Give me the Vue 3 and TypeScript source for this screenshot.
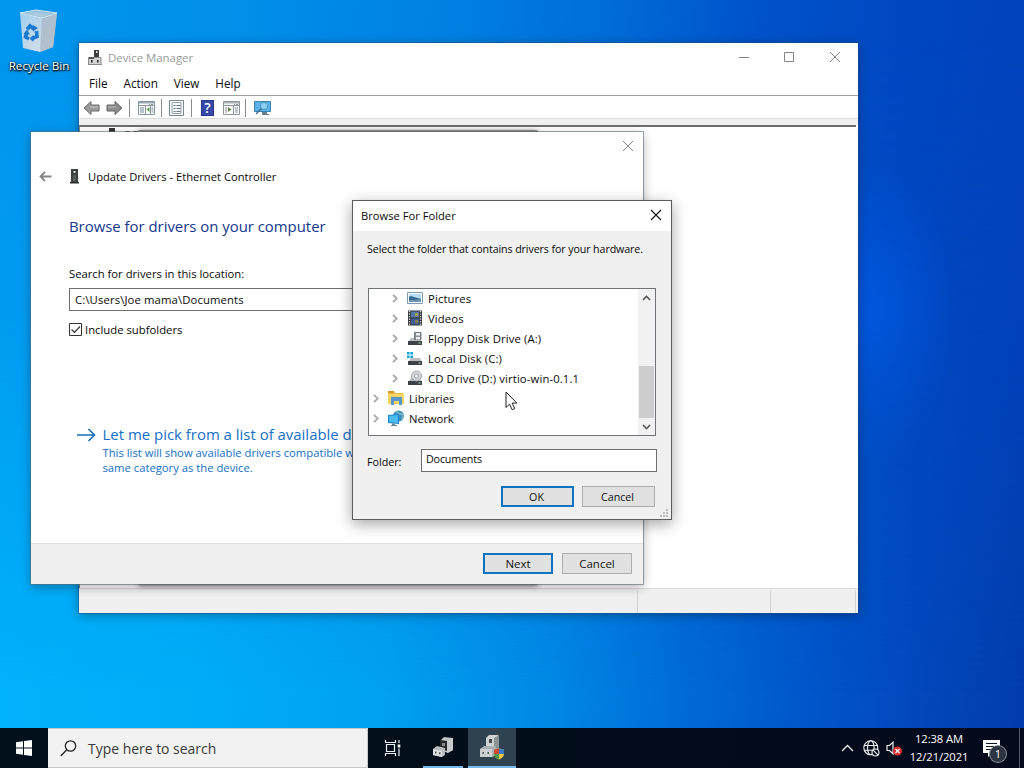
<script setup lang="ts">
interface TreeItem {
  label: string
  icon: string
  level: number
}

const menus: string[] = ['File', 'Action', 'View', 'Help']

const tree: TreeItem[] = [
  { label: 'Pictures', icon: 'pictures', level: 1 },
  { label: 'Videos', icon: 'videos', level: 1 },
  { label: 'Floppy Disk Drive (A:)', icon: 'floppy', level: 1 },
  { label: 'Local Disk (C:)', icon: 'disk', level: 1 },
  { label: 'CD Drive (D:) virtio-win-0.1.1', icon: 'cd', level: 1 },
  { label: 'Libraries', icon: 'libraries', level: 0 },
  { label: 'Network', icon: 'network', level: 0 },
]
</script>

<template>
  <div class="desktop">
    <div class="wallpaper" />
    <div class="shortcut">
      <svg class="bin" width="40" height="44" viewBox="0 0 40 44">
        <defs>
          <linearGradient id="binFront" x1="0" y1="0" x2="1" y2="1">
            <stop offset="0" stop-color="#a3cfed" />
            <stop offset="1" stop-color="#dfe1e6" />
          </linearGradient>
        </defs>
        <path d="M1 4 L19 8 L38 4 L34 38 L21 43 L4 39 Z" fill="url(#binFront)" />
        <path d="M23 8 L38 4 L34 38 L21 43 Z" fill="#a8b6c4" opacity=".75" />
        <path d="M1 4 L17 1 L38 4 L23 9 Z" fill="#8cbfdd" stroke="#d3e8f4" stroke-width="1" />
        <path d="M4 5 L17 3 L34 5 L23 8 Z" fill="#a9c9dc" />
        <g fill="none" stroke="#1b7bd0" stroke-width="3.6">
          <path d="M8 20.500 L11 17 L15 20" />
          <path d="M17.500 22 L18 27.500 L13 29.500" />
          <path d="M10 30 L6.500 28 L8 23" />
        </g>
        <path d="M14 16 L19 19 L14 22.500 Z M14.500 26 L14.500 33 L10.500 29.500 Z M4.500 25 L8 20.500 L11 25.500 Z" fill="#1b7bd0" />
      </svg>
      <span class="shortcut-label">Recycle Bin</span>
    </div>

    <!-- Device Manager -->
    <section class="win manager">
      <header class="m-title">
        <svg width="14" height="16" viewBox="0 0 14 16">
          <path d="M6 0h5v8H6z" fill="#3c3c3c" />
          <path d="M8 1h1.500v2H8z" fill="#ddd" />
          <path d="M.500 7.500h12.500v7H.500z" fill="#d2d2d2" stroke="#8b8b8b" />
          <path d="M1 7h5v2H1z" fill="#555" />
          <path d="M3 10h1.500v2.500H3zM9 10h1.500v2.500H9z" fill="#222" />
          <path d="M0 14h14v1H0z" fill="#888" />
        </svg>
        <h1>Device Manager</h1>
        <div class="m-controls">
          <svg width="12" height="12" viewBox="0 0 12 12"><path d="M1 6.500h10" /></svg>
          <svg width="12" height="12" viewBox="0 0 12 12"><path d="M1.500 1.500h9v9h-9z" /></svg>
          <svg width="12" height="12" viewBox="0 0 12 12"><path d="M1 1l10 10M11 1L1 11" /></svg>
        </div>
      </header>
      <nav class="menus"><span v-for="m in menus" :key="m">{{ m }}</span></nav>
      <div class="tools">
        <svg class="t-arrow" width="17" height="16" viewBox="0 0 17 16">
          <path d="M1 8L8 1.500V5h8v6H8v3.500z" fill="#9b9b9b" stroke="#6b6b6b" />
          <path d="M7 7h8" stroke="#c6c6c6" />
        </svg>
        <svg class="t-arrow2" width="17" height="16" viewBox="0 0 17 16">
          <path d="M16 8L9 1.500V5H1v6h8v3.500z" fill="#8c8c8c" stroke="#666" />
          <path d="M2 7h8" stroke="#c0c0c0" />
        </svg>
        <i class="sep s1" />
        <svg class="t-tree" width="17" height="16" viewBox="0 0 17 16">
          <path d="M.500 1.500h16v13H.500z" fill="#fdfdfd" stroke="#8396a3" />
          <path d="M1 2h15v1.500H1z" fill="#9aabb6" />
          <path d="M1 5.500h15M7.500 6v8M12.500 6v8" stroke="#8a9aa5" />
          <path d="M2 8h4M2 10h4M2 12h4M13.500 8h2M13.500 10h2M13.500 12h2" stroke="#75899a" />
          <path d="M11.500 7v5L8.500 9.500z" fill="#5c9a4c" />
          <path d="M11 4.500h1M13 4.500h2" stroke="#7d8f9b" />
        </svg>
        <i class="sep s2" />
        <svg class="t-prop" width="15" height="16" viewBox="0 0 15 16">
          <path d="M.500.500h14v15H.500z" fill="#fff" stroke="#748792" />
          <path d="M3 2.500h9v11H3z" fill="#f3f5f6" stroke="#93a2ab" />
          <path d="M4.500 5.500h2M7.500 5.500h4M4.500 8.500h2M7.500 8.500h4M4.500 11.500h2M7.500 11.500h4" stroke="#627783" />
        </svg>
        <i class="sep s3" />
        <div class="t-help">?</div>
        <svg class="t-scan" width="17" height="16" viewBox="0 0 17 16">
          <path d="M.500 1.500h16v13H.500z" fill="#fdfdfd" stroke="#8c979d" />
          <path d="M1 2h15v1.500H1z" fill="#a7b1b5" />
          <path d="M1 5.500h15M10.500 6v8" stroke="#8a9aa5" />
          <path d="M2 8h2M2 10h2M2 12h2M12 8h3M12 10h3M12 12h3" stroke="#82919b" />
          <path d="M5 7v5l3.500-2.500z" fill="#5c8a3c" />
          <path d="M11 4.500h1M13 4.500h2" stroke="#87959c" />
        </svg>
        <i class="sep s4" />
        <svg class="t-mon" width="18" height="17" viewBox="0 0 18 17">
          <path d="M.500 1.500h16v10H.500z" fill="#5ab3e6" stroke="#3d82b0" />
          <path d="M8 12h5v2H8zM8 14h7v1H8z" fill="#66808f" />
          <circle cx="10" cy="6" r="3.600" fill="#8ad2f4" stroke="#5595bd" />
          <path d="M7.500 8.500L2 14" stroke="#3c718f" stroke-width="1.500" />
        </svg>
      </div>
      <div class="m-gap" />
      <div class="m-body">
        <div class="m-row">
          <svg width="10" height="14" viewBox="0 0 10 14"><path d="M2 0h6v9H2z" fill="#333" /></svg>
          <span>DE</span>
        </div>
      </div>
      <footer class="m-status"><span class="st a" /><span class="st b" /><span class="st c" /></footer>
    </section>

    <div class="ghost" />

    <!-- Update Drivers wizard -->
    <section class="win wizard">
      <svg class="w-close" width="12" height="12" viewBox="0 0 12 12"><path d="M1 1l10 10M11 1L1 11" /></svg>
      <header class="w-head">
        <svg width="13" height="11" viewBox="0 0 13 11">
          <path d="M12.500 5.500H1.500M6 1L1.500 5.500L6 10" fill="none" stroke="#858585" stroke-width="1.800" />
        </svg>
        <svg class="w-dev" width="9" height="15" viewBox="0 0 9 15">
          <path d="M1 0h7v14H1z" fill="#3b3f3e" />
          <path d="M3.500 2h2v2h-2z" fill="#d9e3da" />
          <path d="M3 6h3v6H3z" fill="#56605b" />
          <path d="M0 13h9v1.500H0z" fill="#2e2e2e" />
        </svg>
        <span>Update Drivers - Ethernet Controller</span>
      </header>
      <h2>Browse for drivers on your computer</h2>
      <label class="w-label">Search for drivers in this location:</label>
      <div class="w-path">C:\Users\Joe mama\Documents</div>
      <div class="w-check">
        <svg width="13" height="13" viewBox="0 0 13 13">
          <path d="M.500.500h12v12H.500z" fill="#fff" stroke="#333" />
          <path d="M2.500 6.500l3 3L11 3.500" fill="none" stroke="#333" stroke-width="1.200" />
        </svg>
        <span>Include subfolders</span>
      </div>
      <div class="w-link">
        <svg width="19" height="14" viewBox="0 0 19 14">
          <path d="M0 7h17.500M11.500 1l6 6l-6 6" fill="none" stroke="#1a6fb8" stroke-width="1.600" />
        </svg>
        <div>
          <p class="l-main">Let me pick from a list of available d</p>
          <p class="l-sub">This list will show available drivers compatible w</p>
          <p class="l-sub l-two">same category as the device.</p>
        </div>
      </div>
      <footer class="w-foot">
        <button class="btn primary">Next</button>
        <button class="btn">Cancel</button>
      </footer>
    </section>

    <!-- Browse For Folder -->
    <section class="win browse">
      <header class="b-title">
        <span>Browse For Folder</span>
        <svg width="12" height="12" viewBox="0 0 12 12"><path d="M1 1l10 10M11 1L1 11" stroke="#111" stroke-width="1.100" /></svg>
      </header>
      <p class="b-msg">Select the folder that contains drivers for your hardware.</p>
      <div class="tree">
        <ul>
          <li v-for="t in tree" :key="t.label" :class="{ deep: t.level === 1 }">
            <svg class="chev" width="6" height="9" viewBox="0 0 6 9"><path d="M1 .800l3.700 3.700L1 8.200" fill="none" stroke="#a3a3a3" stroke-width="1.700" /></svg>
            <svg class="ico" width="16" height="16" viewBox="0 0 16 16">
              <template v-if="t.icon === 'pictures'">
                <path d="M.500 2.500h15v11H.500z" fill="#fff" stroke="#7f9bb3" />
                <path d="M2 4h12v4H2z" fill="#b5dcf3" />
                <path d="M2 6.500c4-1 6 2 12 2v3H2z" fill="#376a93" />
                <path d="M2 10c4 0 7 0 12-1v3H2z" fill="#6f95b3" />
              </template>
              <template v-else-if="t.icon === 'videos'">
                <path d="M1 0.500h14v15H1z" fill="#303234" />
                <path d="M4 1.500h8v6H4z" fill="#5678a8" /><path d="M4 8.500h8v6H4z" fill="#405f90" />
                <path d="M8 3h3v3H8z" fill="#a69d48" /><path d="M8 10h3v3H8z" fill="#827c54" />
                <path d="M2.500 1v15M13.500 1v15" stroke="#e3e3e3" stroke-width="1.400" stroke-dasharray="1.200 1.300" />
              </template>
              <template v-else-if="t.icon === 'libraries'">
                <path d="M0 1h6l1 2h8v10H0z" fill="#e9b93c" />
                <path d="M0 4h16v10H0z" fill="#f8d567" />
                <path d="M0 1h6v2H0z" fill="#d9982a" />
                <path d="M3 7h11v8h-3v-4H6v4H3z" fill="#5797cb" />
              </template>
              <template v-else-if="t.icon === 'network'">
                <circle cx="10.500" cy="6" r="5.500" fill="#3e91b8" />
                <path d="M8 2c3 0 2 2 5 2s2 3 1 5" fill="none" stroke="#7fbfc9" stroke-width="1.300" />
                <path d="M0 5l11-1v10L0 13z" fill="#1e83cf" />
                <path d="M1 6l9-1v8L1 12z" fill="#4bbcf3" />
                <path d="M4 13.500h3V15H4zM3 15h6v1H3z" fill="#63869b" />
              </template>
              <template v-else>
                <path d="M4 8h9l2 4H1z" fill="#b9bdc0" />
                <path d="M1 11h14v4H1z" fill="#3d4247" />
                <path d="M11.500 12.500h2v1h-2z" fill="#b5e3c2" />
                <template v-if="t.icon === 'floppy'">
                  <path d="M7.500 2.500h6.500v7H7.500z" fill="#8b949a" stroke="#6d767d" />
                  <path d="M9 3h4v2.500H9zM9 7h4v2.500H9z" fill="#edf1f4" />
                </template>
                <template v-else-if="t.icon === 'disk'">
                  <path d="M0 2h2.600v2.600H0zM3.400 2H6v2.600H3.400zM0 5.400h2.600V8H0zM3.400 5.400H6V8H3.400z" fill="#14a6d8" />
                </template>
                <template v-else>
                  <circle cx="9.500" cy="6" r="5" fill="#d3d7d9" stroke="#94999c" stroke-width=".8" />
                  <circle cx="9.500" cy="6" r="2" fill="#f2f3f3" stroke="#8d9295" stroke-width=".8" />
                </template>
              </template>
            </svg>
            <span>{{ t.label }}</span>
          </li>
        </ul>
        <div class="scroll">
          <svg width="9" height="6" viewBox="0 0 9 6"><path d="M1 5l3.500-3.700L8 5" /></svg>
          <div class="thumb" />
          <svg width="9" height="6" viewBox="0 0 9 6"><path d="M1 1l3.500 3.700L8 1" /></svg>
        </div>
      </div>
      <div class="b-folder">
        <label>Folder:</label>
        <div class="b-input">Documents</div>
      </div>
      <div class="b-actions">
        <button class="btn primary">OK</button>
        <button class="btn">Cancel</button>
      </div>
      <svg class="grip" width="10" height="10" viewBox="0 0 10 10">
        <path d="M7 1h2v2H7zM4 4h2v2H4zM7 4h2v2H7zM1 7h2v2H1zM4 7h2v2H4zM7 7h2v2H7z" fill="#bdbdbd" />
      </svg>
    </section>

    <svg class="cursor" width="13" height="20" viewBox="0 0 13 20">
      <path d="M1 1v15.500l3.600-3.400l2.500 5.600l2.600-1.100l-2.500-5.500h4.700z" fill="#fff" stroke="#222" stroke-width="1" />
    </svg>

    <!-- Taskbar -->
    <footer class="taskbar">
      <div class="start">
        <svg width="16" height="16" viewBox="0 0 16 16">
          <path d="M0 2.200L7 1.200V7.500H0zM8 1.100L16 0v7.500H8zM0 8.500h7v6.300L0 13.800zM8 8.500h8V16l-8-1.100z" fill="#fff" />
        </svg>
      </div>
      <div class="search">
        <svg width="17" height="17" viewBox="0 0 17 17">
          <circle cx="10.500" cy="6" r="5.200" fill="none" stroke="#222" stroke-width="1.300" />
          <path d="M6.800 9.700L.800 16" stroke="#222" stroke-width="1.300" />
        </svg>
        <span>Type here to search</span>
      </div>
      <div class="task view">
        <svg width="17" height="16" viewBox="0 0 17 16" fill="none" stroke="#e9eef2" stroke-width="1.200">
          <path d="M1.500 0v2.500h10V0M1.500 16v-2.500h10V16M2.500 4.500h8v7h-8zM15 0v3M15 8.500V16" />
          <path d="M13.700 4.500h2.600v3h-2.600z" fill="#fff" stroke="none" />
        </svg>
      </div>
      <div class="task open">
        <svg width="24" height="24" viewBox="0 0 24 24">
          <path d="M9 6l4-4l9 1v12l-5 3l-8-3z" fill="#c0c2c4" />
          <path d="M9 5l7 1v10l-7-2z" fill="#25292c" />
          <path d="M11 8h3v3h-3z" fill="#85898c" />
          <path d="M16 6l6-3v12l-6 3z" fill="#c9cbcd" />
          <path d="M2 14l4-3l8 2v7l-3 2l-9-2z" fill="#b9bcbe" />
          <path d="M2 14l9 2v6l-9-2z" fill="#dcdedf" />
          <path d="M4 16.500h1.500v2H4zM8 17.200h1.500v2H8z" fill="#555" />
        </svg>
      </div>
      <div class="task open active">
        <svg width="26" height="26" viewBox="0 0 26 26">
          <path d="M7 4l3-3h9v14l-4 3H7z" fill="#d0d3d3" />
          <path d="M15 4l5-3v14l-5 3z" fill="#8c9395" />
          <path d="M10 5h3v4h-3z" fill="#444a4e" />
          <path d="M1 15l4-3h12v8l-3 3H1z" fill="#a9aeb0" />
          <path d="M1 15h12v8H1z" fill="#cdd0d0" />
          <path d="M3.500 18h1.500v2H3.500zM8.500 18H10v2H8.500z" fill="#555" />
          <path d="M15 15.500q2.500 0 5-1.500q2.500 1.500 5 1.500v4q0 4-5 6q-5-2-5-6z" fill="#f3c93b" />
          <path d="M20 14q2.500 1.500 5 1.500V20h-5z" fill="#3a78c9" />
          <path d="M15 15.500q2.500 0 5-1.500v6h-5z" fill="#cf4a35" />
          <path d="M15 20h5v5.500q-5-2-5-5.500z" fill="#4a9a4c" />
        </svg>
      </div>
      <div class="tray">
        <svg class="up" width="13" height="8" viewBox="0 0 13 8"><path d="M1 7l5.500-5.500L12 7" fill="none" stroke="#f1f1f1" stroke-width="1.300" /></svg>
        <svg class="globe" width="17" height="17" viewBox="0 0 17 17" fill="none" stroke="#f0f0f0" stroke-width="1.100">
          <circle cx="7.800" cy="7.800" r="7" />
          <ellipse cx="7.800" cy="7.800" rx="3.300" ry="7" />
          <path d="M1 5.500h13.600M1 10.300h13.600" />
          <circle cx="12.500" cy="12.500" r="3.500" fill="#04101f" />
          <path d="M10.200 10.200l4.600 4.600" />
        </svg>
        <svg class="vol" width="16" height="15" viewBox="0 0 16 15">
          <path d="M1 4.500h2.500L7 1.200v11.600L3.500 9.500H1z" fill="none" stroke="#f0f0f0" stroke-width="1.200" />
          <circle cx="11.500" cy="10" r="4.500" fill="#d83030" />
          <path d="M9.500 8l4 4M13.500 8l-4 4" stroke="#fff" stroke-width="1.100" />
        </svg>
        <div class="clock"><span>12:38 AM</span><span class="date">12/21/2021</span></div>
        <div class="notes">
          <svg width="17" height="17" viewBox="0 0 17 17">
            <path d="M0 0h17v13H9l-4 4v-4H0z" fill="#fff" />
            <path d="M3 3.500h11M3 6.500h11M3 9.500h7" stroke="#0a1524" />
          </svg>
          <span class="badge">1</span>
        </div>
      </div>
    </footer>
  </div>
</template>

<style>
html, body { margin: 0; overflow: hidden; }
</style>

<style scoped>
.desktop {
  position: relative;
  width: 1024px;
  height: 768px;
  overflow: hidden;
  font-family: "Open Sans", "Noto Sans", sans-serif;
  font-size: 11.3px;
  color: #0a0a0a;
  background: linear-gradient(97deg, #00b4fc 0%, #00aef8 24%, #00a0f2 42%, #0088e5 57%, #006dd6 68%, #0056ca 80%, #0346ba 91%, #013bad 100%);
}
.wallpaper {
  position: absolute;
  inset: 0;
  background:
    radial-gradient(ellipse 85px 150px at 872px 315px, rgba(0, 92, 236, .75), rgba(0, 80, 225, 0)),
    linear-gradient(97deg, #0096ee 0%, #0090ea 20%, #0081e2 40%, #006ad6 56%, #0052ca 68%, #0046c0 84%, #033eb6 100%);
  -webkit-mask-image: linear-gradient(to bottom, #000 5%, rgba(0, 0, 0, .8) 40%, transparent 90%);
  mask-image: linear-gradient(to bottom, #000 5%, rgba(0, 0, 0, .8) 40%, transparent 90%);
}
h1, h2, p, ul { margin: 0; padding: 0; font-weight: 400; list-style: none; }
svg { display: block; flex: none; }
span, p, label, h1, h2 { white-space: nowrap; }
.shortcut {
  position: absolute;
  left: 0; top: 9px; width: 78px;
  display: flex; flex-direction: column; align-items: center;
}
.shortcut-label {
  margin-top: 5px; line-height: 16px; color: #fff; font-size: 11.600px;
  text-shadow: 0 1px 2px #000, 1px 1px 2px #000, 0 0 2px rgba(0, 0, 0, .6);
}
.win { position: absolute; box-sizing: border-box; display: flex; flex-direction: column; }

.manager {
  left: 79px; top: 43px; width: 779px; height: 570px;
  background: #fff;
  box-shadow: 0 0 0 1px rgba(20, 80, 130, .45), 0 2px 10px rgba(0, 0, 0, .35);
}
.m-title { display: flex; align-items: center; height: 30px; padding: 0 17px 0 9px; }
.m-title h1 { margin-left: 6px; font-size: 11.4px; line-height: 16px; color: #999; }
.m-controls { margin: -2px 0 0 auto; display: flex; gap: 33.500px; }
.m-controls svg:nth-child(2) { margin: 0 .5px 0 -.5px; }
.m-controls path, .w-close path { fill: none; stroke: #858585; }
.menus { display: flex; gap: 16px; height: 22px; line-height: 20px; padding-left: 10px; font-size: 11.700px; }
.tools {
  box-sizing: border-box; display: flex; align-items: center; height: 24px; padding: 2px 0 0 5px;
  border-top: 1px solid #a0a0a0; border-bottom: 1px solid #dcdcdc;
}
.t-arrow { margin-left: -1px; }
.t-arrow2 { margin-left: 6px; }
.sep { width: 1px; height: 18px; background: #8c8c8c; }
.s1 { margin: 0 8px 0 6px; }
.s2 { margin: 0 7px 0 6px; }
.s3 { margin: 0 9px 0 7px; }
.s4 { margin: 0 8px 0 5px; }
.t-help {
  width: 13px; height: 16px; line-height: 15px; text-align: center; background: #3648a8;
  color: #fff; font-weight: 600; font-size: 14px; margin-right: 9px;
  box-shadow: inset 0 0 0 1px #27378a;
}
.m-gap { height: 6px; background: #f0f0f0; }
.m-body {
  box-sizing: border-box; flex: 1; border-top: 2px solid #6e6e6e; border-left: 1px solid #828282; overflow: hidden;
  margin-right: 2px;
}
.m-row { display: flex; height: 16px; padding: 1px 0 0 27px; gap: 7px; line-height: 14px; }
.m-status {
  box-sizing: border-box; height: 25px; display: flex; background: #f0f0f0;
  border-top: 1px solid #dadada; padding-top: 2px;
}
.st { box-sizing: border-box; border-right: 1px solid #d2d2d2; height: 22px; }
.st.a { width: 559px; }
.st.b { width: 133px; }
.st.c { width: 85px; }
.ghost {
  position: absolute; left: 138px; top: 130px; width: 400px; height: 455px;
  background: #888; border-radius: 2px; box-shadow: 0 1px 5px rgba(0, 0, 0, .5);
}

.wizard {
  left: 31px; top: 132px; width: 612px; height: 452px; background: #fff;
  box-shadow: 0 0 0 1px rgba(90, 110, 120, .6), 0 3px 10px rgba(0, 0, 0, .32);
}
.w-close { align-self: flex-end; margin: 8px 9px 0 0; }
.w-head { display: flex; align-items: center; height: 16px; margin: 16px 0 0 8px; font-size: 11.200px; }
.w-dev { margin: 0 9px 0 18px; }
.wizard h2 { margin: 31px 0 0 38px; font-size: 14.900px; line-height: 22px; color: #14378c; }
.w-label { margin: 29px 0 0 38px; line-height: 16px; letter-spacing: -.02px; }
.w-path {
  box-sizing: border-box; width: 440px; height: 23px; margin: 6px 0 0 38px; padding-left: 5px;
  border: 1px solid #6e6e6e; line-height: 21px; letter-spacing: .12px;
}
.w-check { display: flex; align-items: center; gap: 3px; height: 16px; margin: 10px 0 0 38px; }
.w-link { display: flex; gap: 6.500px; margin: 86px 0 0 46px; color: #1470c4; }
.w-link svg { margin-top: 5px; }
.l-main { font-size: 14.950px; line-height: 22px; }
.l-sub { font-size: 11.250px; line-height: 15px; }
.w-foot {
  box-sizing: border-box; display: flex; justify-content: flex-end; gap: 9px; height: 41px; margin-top: auto;
  padding: 9px 11px 0 0; background: #f0f0f0; border-top: 1px solid #dfdfdf;
}
.btn {
  box-sizing: border-box; width: 70px; height: 21px; padding: 0; border: 1px solid #adadad; border-radius: 0;
  background: #e1e1e1; font: inherit; font-size: 11.500px; line-height: 18px; color: #111;
}
.btn.primary { border: 2px solid #0f74bf; line-height: 16px; }

.browse {
  left: 352px; top: 200px; width: 320px; height: 320px; background: #f0f0f0;
  border: 1px solid #5c5c5c; box-shadow: 0 4px 14px rgba(0, 0, 0, .36);
}
.b-title {
  display: flex; align-items: center; justify-content: space-between; height: 30px; background: #fff;
  padding: 0 9px 0 8px; font-size: 11.200px;
}
.b-title span { line-height: 16px; }
.b-title svg { margin-top: -2px; }
.b-msg { margin: 10px 0 0 14px; font-size: 10.700px; line-height: 16px; letter-spacing: -.11px; }
.tree {
  box-sizing: border-box; display: flex; justify-content: space-between; width: 288px; height: 148px;
  margin: 31px 0 0 15px; background: #fff; border: 1px solid #6f7276;
}
.tree ul { margin-top: -1px; }
.tree li { display: flex; align-items: center; height: 20px; padding-left: 4px; letter-spacing: -.05px; }
.tree li.deep { padding-left: 23px; letter-spacing: .12px; }
.ico { margin: 0 5px 0 9px; }
.scroll {
  box-sizing: border-box; display: flex; flex-direction: column; align-items: center; width: 17px;
  background: #f1f1f1; padding: 6px 0 5px;
}
.scroll path { fill: none; stroke: #505050; stroke-width: 1.600; }
.scroll svg { flex: none; }
.thumb { flex: none; width: 15px; height: 52px; margin: 65px 0 6px; background: #cdcdcd; }
.b-folder { display: flex; margin: 13px 0 0 14px; font-size: 10.700px; }
.b-folder label { width: 54px; line-height: 26px; height: 23px; }
.b-input {
  box-sizing: border-box; width: 236px; height: 23px; background: #fff; border: 1px solid #6e6e6e;
  padding-left: 4px; line-height: 19px; letter-spacing: -.15px;
}
.b-actions { display: flex; gap: 8px; margin: 14px 0 0 148px; }
.b-actions .btn { width: 73px; font-size: 10.700px; padding-right: 2px; }
.grip { position: absolute; right: 2px; bottom: 1px; }
.cursor { position: absolute; left: 505px; top: 391px; }

.taskbar {
  position: absolute; left: 0; right: 0; bottom: 0; height: 40px; display: flex;
  background: linear-gradient(90deg, #02101c, #020d1a 50%, #040a1c);
}
.start { width: 48px; display: flex; align-items: center; justify-content: center; }
.search {
  box-sizing: border-box; width: 320px; display: flex; align-items: center; padding-left: 12px; gap: 11px;
  background: #f2f2f2; border: 1px solid #c9c9c9; border-left: 0; font-size: 13.950px; color: #3a3a3a;
}
.task { box-sizing: border-box; display: flex; align-items: center; justify-content: center; width: 48px; }
.view { width: 55px; padding-right: 7px; }
.open { width: 40px; border-bottom: 2px solid #76b9ed; }
.active { width: 48px; margin-left: 5px; background: #2e4250; }
.tray { display: flex; align-items: center; margin-left: auto; color: #fff; height: 40px; }
.globe { margin-left: 9px; }
.vol { margin-left: 6px; }
.clock {
  display: flex; flex-direction: column; align-items: center; width: 58px; margin-left: 8px;
  font-size: 11.200px; line-height: 18px; padding-bottom: 1px; letter-spacing: -.08px;
}
.notes {
  box-sizing: border-box; position: relative; width: 37px; height: 40px; margin: 0 4px 0 15px;
  border-right: 1px solid #50586a;
}
.notes svg { margin-top: 12px; }
.badge {
  position: absolute; left: 7px; top: 18px; width: 16px; height: 16px; border-radius: 50%;
  background: #2b3440; box-shadow: 0 0 0 1px #87909a; text-align: center; font-size: 11px; line-height: 16px;
}
</style>
